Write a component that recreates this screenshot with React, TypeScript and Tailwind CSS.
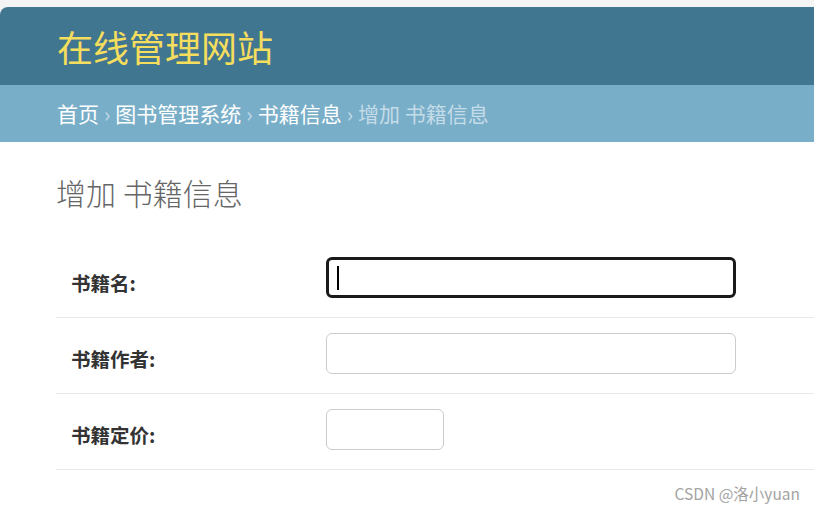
const font = { fontFamily: '"Noto Sans CJK SC", "Liberation Sans", sans-serif' };

function Row({ label, wide = true, focused = false }: { label: string; wide?: boolean; focused?: boolean }) {
  return (
    <div className="flex items-center h-[76px] pl-[15px] border-b border-[#e8e8e8]">
      <label className="w-[255px] text-[19.5px] font-bold text-[#333] mt-[6px]">{label}</label>
      <div
        className={`relative h-[41px] -mt-[4px] rounded-[6px] bg-white ${wide ? "w-[410px]" : "w-[118px]"} ${
          focused ? "border-[3px] border-[#1a1a1a]" : "border border-[#cccccc]"
        }`}
      >
        {focused && <span className="absolute left-[8px] top-[6px] w-[2px] h-[24px] bg-black" />}
      </div>
    </div>
  );
}

export default function App() {
  return (
    <div className="relative w-[814px] h-[512px] overflow-hidden bg-white" style={font}>
      {/* Top strip + header */}
      <div className="bg-[#f4f4f4] pt-[7px]">
        <div className="h-[78px] bg-[#417690] rounded-tl-[8px] flex items-center pl-[57px]">
          <h1 className="text-[36px] leading-none text-[#f5dd5d] font-normal">在线管理网站</h1>
        </div>
      </div>

      {/* Breadcrumbs */}
      <div className="h-[57px] bg-[#79aec8] flex items-center pl-[57px] text-[21px] leading-none">
        <a className="text-white">首页</a>
        <span className="text-[#c4dce8] mx-[5px]">›</span>
        <a className="text-white">图书管理系统</a>
        <span className="text-[#c4dce8] mx-[5px]">›</span>
        <a className="text-white">书籍信息</a>
        <span className="text-[#c4dce8] mx-[5px]">›</span>
        <span className="text-[#c4dce8]">增加 书籍信息</span>
      </div>

      {/* Content */}
      <div className="pl-[56px]">
        <h2 className="mt-[32px] h-[36px] leading-[36px] text-[30px] font-light text-[#666]">增加 书籍信息</h2>
        <div className="mt-[32px]">
          <Row label="书籍名:" focused />
          <Row label="书籍作者:" />
          <Row label="书籍定价:" wide={false} />
        </div>
      </div>

      <span className="absolute right-[14px] bottom-[7px] text-[15.5px] text-[#a3a3a3]">CSDN @洛小yuan</span>
    </div>
  );
}
